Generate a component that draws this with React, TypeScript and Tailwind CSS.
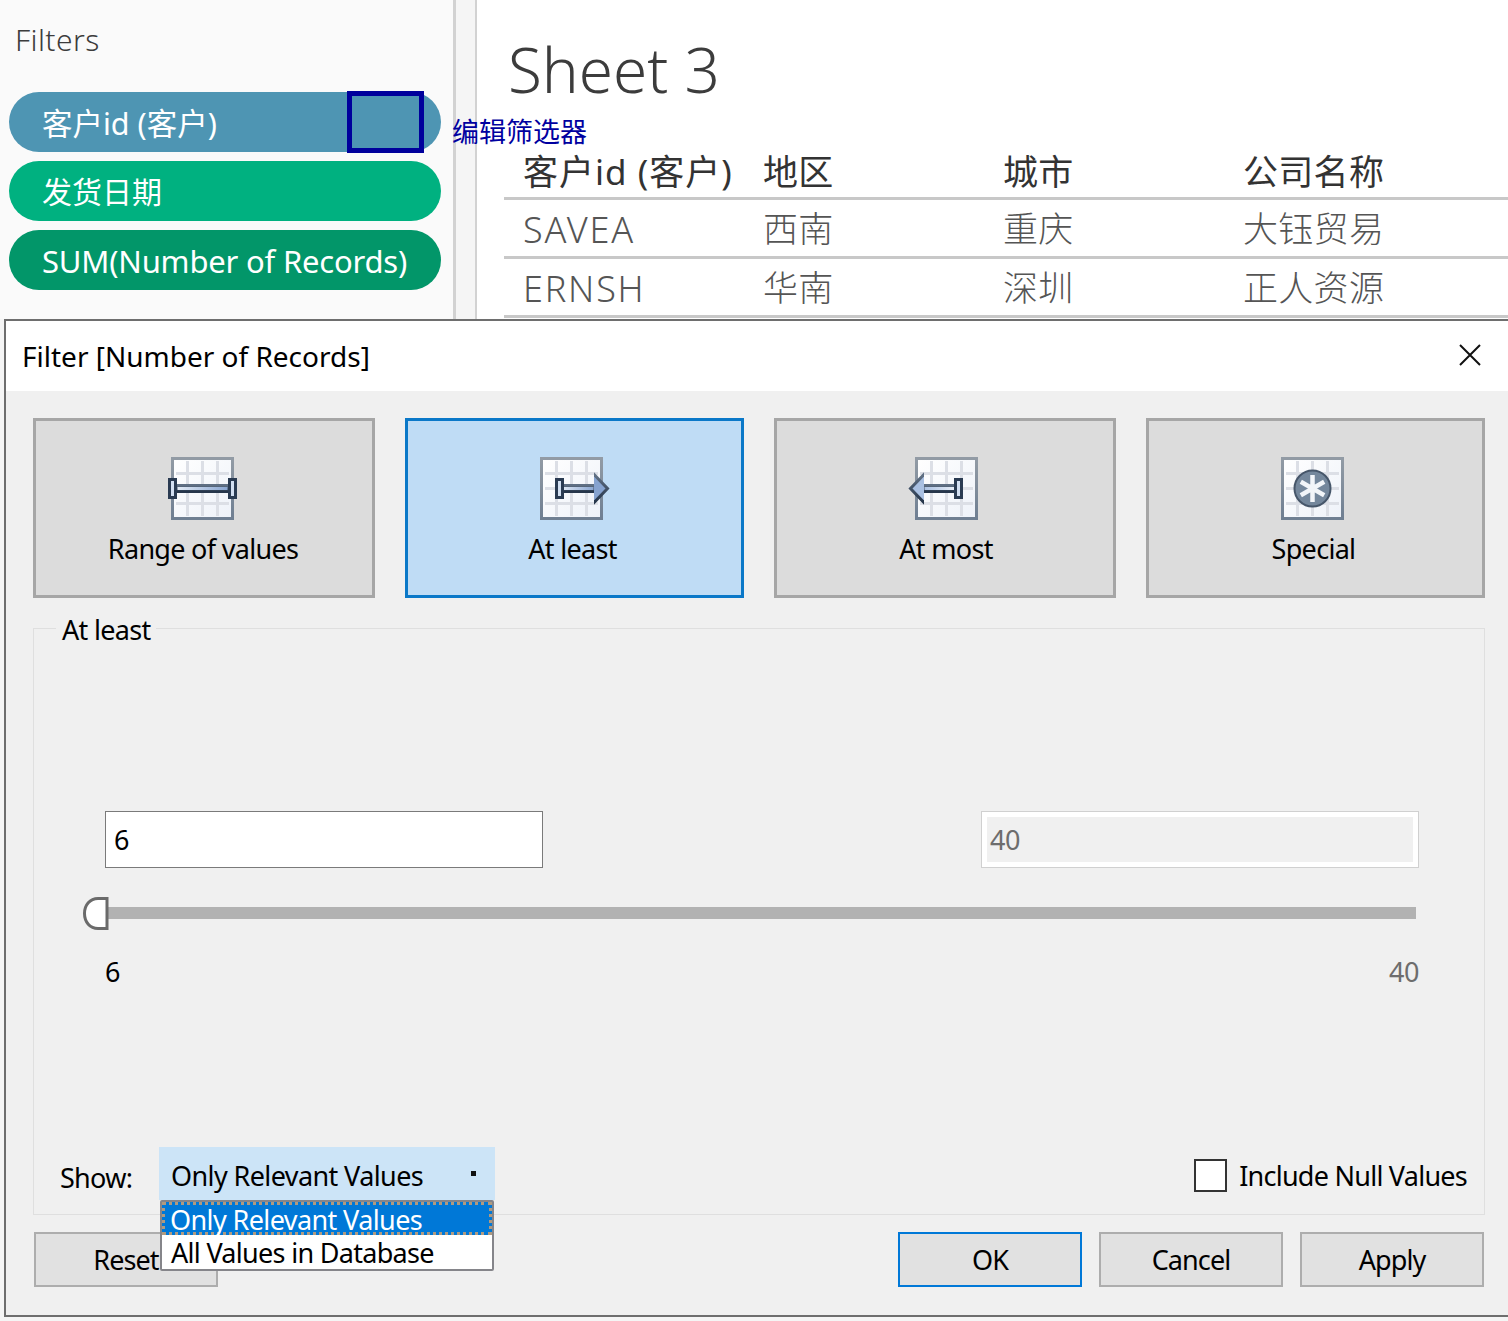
import { ReactNode } from "react";

const ROWS = [
  ["SAVEA", "西南", "重庆", "大钰贸易"],
  ["ERNSH", "华南", "深圳", "正人资源"],
];
const HEADERS = ["客户id (客户)", "地区", "城市", "公司名称"];

function IconGrid({ children }: { children?: ReactNode }) {
  return (
    <svg width="63" height="63" viewBox="0 0 63 63" className="overflow-visible">
      <defs>
        <linearGradient id="cell" x1="0" y1="0" x2="1" y2="1">
          <stop offset="0" stopColor="#ffffff" />
          <stop offset="1" stopColor="#eef2f9" />
        </linearGradient>
        <linearGradient id="bar" x1="0" y1="0" x2="1" y2="0">
          <stop offset="0" stopColor="#e4ecf6" />
          <stop offset="1" stopColor="#86a3d0" />
        </linearGradient>
        <linearGradient id="barLeft" x1="0" y1="0" x2="1" y2="0">
          <stop offset="0" stopColor="#a9c0e2" />
          <stop offset="1" stopColor="#eef3fa" />
        </linearGradient>
        <linearGradient id="frame" x1="0" y1="0" x2="0" y2="1">
          <stop offset="0" stopColor="#929ba5" />
          <stop offset="1" stopColor="#6f7f92" />
        </linearGradient>
        <linearGradient id="stroke" x1="0" y1="0" x2="0" y2="1">
          <stop offset="0" stopColor="#5f6f83" />
          <stop offset="1" stopColor="#26364b" />
        </linearGradient>
      </defs>
      <rect x="1.5" y="1.5" width="60" height="60" fill="url(#cell)" stroke="url(#frame)" strokeWidth="3" />
      <path
        d="M16.5 4v55M31.5 4v55M46.5 4v55M5 16.5h53M5 31.5h53M5 46.5h53"
        stroke="#dcdfe6"
        strokeWidth="3"
        fill="none"
      />
      {children}
    </svg>
  );
}

function Handle({ x }: { x: number }) {
  return <rect x={x + 1.5} y="22.5" width="6" height="18" fill="#d3e0f2" stroke="#2a3b52" strokeWidth="3" />;
}

function RangeIcon() {
  return (
    <IconGrid>
      <rect x="5" y="28.5" width="53" height="6" fill="url(#bar)" stroke="url(#stroke)" strokeWidth="3" />
      <Handle x={-3} />
      <Handle x={57} />
    </IconGrid>
  );
}

function AtLeastIcon() {
  return (
    <IconGrid>
      <rect x="20" y="28.5" width="35" height="6" fill="url(#bar)" stroke="url(#stroke)" strokeWidth="3" />
      <path d="M54 18 69 31.5 54 45Z" fill="#86a3d0" />
      <path d="M55.5 20v-1l12 12.5-12 12.5v-1" fill="none" stroke="url(#stroke)" strokeWidth="3" />
      <Handle x={15} />
    </IconGrid>
  );
}

function AtMostIcon() {
  return (
    <IconGrid>
      <rect x="8" y="28.5" width="35" height="6" fill="url(#barLeft)" stroke="url(#stroke)" strokeWidth="3" />
      <path d="M9 18-6 31.5 9 45Z" fill="#a9c0e2" />
      <path d="M7.5 20v-1L-4.5 31.5 7.5 44v-1" fill="none" stroke="url(#stroke)" strokeWidth="3" />
      <Handle x={39} />
    </IconGrid>
  );
}

function SpecialIcon() {
  return (
    <IconGrid>
      <circle cx="31.5" cy="31.5" r="18" fill="#74879c" stroke="#46566a" strokeWidth="2" />
      <path
        d="M31.5 18v27M19.8 24.7l23.4 13.5M19.8 38.2l23.4-13.5"
        stroke="#f2f5f9"
        strokeWidth="4.5"
        fill="none"
      />
    </IconGrid>
  );
}

function ModeButton({
  label,
  icon,
  width,
  selected,
  shift,
  labelShift,
}: {
  label: string;
  icon: ReactNode;
  width: string;
  selected?: boolean;
  shift: string;
  labelShift: string;
}) {
  return (
    <div
      className={
        selected
          ? `${width} h-[180px] shrink-0 border-[3px] border-[#0a78c8] bg-[#bfdcf5] flex flex-col items-center pt-[36px]`
          : `${width} h-[180px] shrink-0 border-[3px] border-[#a6a6a6] bg-[#dcdcdc] flex flex-col items-center pt-[36px]`
      }
    >
      <div className={`h-[63px] ${shift}`}>{icon}</div>
      <span className={`mt-[11px] text-[27px] leading-[36px] tracking-[-0.7px] text-black ${labelShift}`}>{label}</span>
    </div>
  );
}

function ActionButton({ label, primary }: { label: string; primary?: boolean }) {
  return (
    <div
      className={
        primary
          ? "w-[184px] h-[55px] pt-px border-2 border-[#0078d7] bg-[#e1e1e1] flex items-center justify-center text-[27px] tracking-[-0.9px] text-black"
          : "w-[184px] h-[55px] pt-px border-2 border-[#adadad] bg-[#e1e1e1] flex items-center justify-center text-[27px] tracking-[-0.9px] text-black"
      }
    >
      {label}
    </div>
  );
}

export default function App() {
  return (
    <div className="relative w-[1508px] h-[1321px] overflow-hidden bg-[#f5f5f5] font-['Noto_Sans','Noto_Sans_CJK_SC',sans-serif]">
      {/* worksheet behind the dialog */}
      <div className="flex h-[319px] overflow-hidden">
        <div className="relative w-[453px] shrink-0 bg-[#fafafa]">
          <div className="pl-[15px] pt-[20px] text-[30px] leading-[40px] tracking-[0.4px] font-light text-[#3c3c3c]">
            Filters
          </div>
          <div className="mt-[32px] ml-[9px] flex w-[432px] flex-col gap-[9px]">
            <div className="h-[60px] pt-[3px] rounded-full bg-[#4e95b3] pl-[33px] flex items-center text-[30.5px] text-white">
              客户id (客户)
            </div>
            <div className="h-[60px] rounded-full bg-[#00b180] pl-[33px] flex items-center text-[30px] text-white">
              发货日期
            </div>
            <div className="h-[60px] pt-[2px] rounded-full bg-[#029669] pl-[33px] flex items-center text-[31px] tracking-[-0.2px] text-white">
              SUM(Number of Records)
            </div>
          </div>
          <div className="absolute left-[347px] top-[91px] w-[77px] h-[62px] border-[5px] border-[#00009c]" />
        </div>
        <div className="w-[3px] shrink-0 bg-[#d2d2d2]" />
        <div className="w-[19px] shrink-0 bg-[#f5f5f5]" />
        <div className="w-[2px] shrink-0 bg-[#d2d2d2]" />
        <div className="flex-1 bg-white pl-[27px]">
          <div className="pl-[4px] pt-[27px] text-[62px] leading-[84px] font-light text-[#3c3c3c]">Sheet 3</div>
          <div className="mt-[34px]">
            <div className="flex h-[49px] items-center border-b-[3px] border-[#c8c8c8] pt-[3px] text-[35px] text-[#333333] box-content">
              {HEADERS.map((h, i) => (
                <div
                  key={h}
                  className={
                    i === 0
                      ? "w-[240px] pl-[19px] whitespace-nowrap tracking-[1px]"
                      : "w-[240px] pl-[19px] whitespace-nowrap tracking-[0.3px]"
                  }
                >
                  {h}
                </div>
              ))}
            </div>
            {ROWS.map((row) => (
              <div
                key={row[0]}
                className="flex h-[56px] items-center border-b-[3px] border-[#c8c8c8] text-[35px] font-light text-[#555555] box-content"
              >
                {row.map((c, i) => (
                  <div
                    key={c}
                    className={
                      i === 0
                        ? "w-[240px] pl-[19px] pt-[3px] whitespace-nowrap text-[36px] tracking-[1.8px]"
                        : "w-[240px] pl-[19px] pt-[3px] whitespace-nowrap tracking-[0.3px]"
                    }
                  >
                    {c}
                  </div>
                ))}
              </div>
            ))}
          </div>
        </div>
      </div>
      <div className="absolute left-[452px] top-[115px] text-[27px] leading-[34px] text-[#0000a0]">编辑筛选器</div>

      {/* filter dialog */}
      <div className="ml-[4px] h-[998px] border-2 border-r-0 border-[#6e6e6e] bg-[#f0f0f0] flex flex-col">
        <div className="h-[70px] shrink-0 bg-white flex items-center justify-between pl-[16px] pr-[27px] text-[28px] text-black">
          <span>Filter [Number of Records]</span>
          <svg width="24" height="24" viewBox="0 0 24 24" fill="none" stroke="#111" strokeWidth="2" className="mb-[2px]">
            <path d="M3 2 23 22M23 2 3 22" />
          </svg>
        </div>
        <div className="flex-1 pl-[27px] pt-[27px] flex flex-col">
          <div className="flex gap-[30px]">
            <ModeButton
              label="Range of values"
              icon={<RangeIcon />}
              width="w-[342px]"
              shift="-ml-[3px]"
              labelShift="-ml-[2px]"
            />
            <ModeButton
              label="At least"
              icon={<AtLeastIcon />}
              width="w-[339px]"
              shift="-ml-[7px]"
              labelShift="-ml-[4px]"
              selected
            />
            <ModeButton label="At most" icon={<AtMostIcon />} width="w-[342px]" shift="ml-[2px]" labelShift="ml-[2px]" />
            <ModeButton
              label="Special"
              icon={<SpecialIcon />}
              width="w-[339px]"
              shift="-ml-[6px]"
              labelShift="-ml-[4px]"
            />
          </div>

          <div className="relative mt-[30px] w-[1452px] h-[587px] border border-[#dfdfdf] flex flex-col pt-[182px]">
            <span className="absolute left-[22px] -top-[17px] bg-[#f0f0f0] px-[6px] text-[27px] leading-[36px] tracking-[-0.7px] text-black">
              At least
            </span>

            <div className="flex justify-between pl-[71px] pr-[65px]">
              <div className="w-[438px] h-[57px] pt-px border border-[#7a7a7a] bg-white flex items-center pl-[8px] text-[27px] text-black">
                6
              </div>
              <div className="w-[438px] h-[57px] border border-[#d0d0d0] bg-white p-[5px]">
                <div className="h-full pt-px bg-[#f0f0f0] flex items-center pl-[3px] text-[27px] tracking-[-0.5px] text-[#6d6d6d]">
                  40
                </div>
              </div>
            </div>

            <div className="relative mt-[39px] ml-[74px] mr-[68px] h-[12px] bg-[#b2b2b2]">
              <svg width="26" height="33" viewBox="0 0 26 33" className="absolute -left-[25px] -top-[10px]">
                <path
                  d="M24 1.5H15C7 1.5 1.5 8 1.5 16.5S7 31.5 15 31.5H24Z"
                  fill="#ffffff"
                  stroke="#6a6a6a"
                  strokeWidth="3"
                />
              </svg>
            </div>

            <div className="mt-[35px] flex justify-between pl-[71px] pr-[65px] text-[27px] leading-[36px]">
              <span className="text-black">6</span>
              <span className="tracking-[-0.5px] text-[#6d6d6d]">40</span>
            </div>

            <div className="relative mt-auto mb-[14px] flex items-start pl-[26px] pr-[17px]">
              <span className="w-[99px] pt-[13px] text-[27px] leading-[36px] tracking-[-0.7px] text-black">Show:</span>
              <div className="w-[336px] h-[53px] pt-[5px] bg-[#cce4f7] flex items-center justify-between pl-[12px] pr-[19px] text-[27px] tracking-[-0.6px] text-black">
                <span>Only Relevant Values</span>
                <span className="mb-[6px] w-[5px] h-[5px] bg-[#111111]" />
              </div>
              <div className="ml-auto mt-[12px] flex items-center">
                <span className="w-[33px] h-[33px] border-2 border-[#333333] bg-white" />
                <span className="ml-[12px] text-[27px] leading-[33px] tracking-[-0.75px] text-black">
                  Include Null Values
                </span>
              </div>

              <div className="absolute left-[126px] top-[53px] z-10 w-[334px] h-[71px] border-2 border-[#85858a] bg-white rounded-[2px] text-[27px]">
                <div className="h-[33px] pt-[4px] bg-[#0078d7] border-[3px] border-dotted border-[#b09a80] pl-[5px] flex items-center tracking-[-0.6px] text-white">
                  Only Relevant Values
                </div>
                <div className="h-[34px] pt-[2px] pl-[9px] flex items-center tracking-[-0.7px] text-black">
                  All Values in Database
                </div>
              </div>
            </div>
          </div>

          <div className="mt-[17px] flex w-[1451px] gap-[17px] pl-px">
            <ActionButton label="Reset" />
            <div className="flex-1" />
            <ActionButton label="OK" primary />
            <ActionButton label="Cancel" />
            <ActionButton label="Apply" />
          </div>
        </div>
      </div>
    </div>
  );
}
